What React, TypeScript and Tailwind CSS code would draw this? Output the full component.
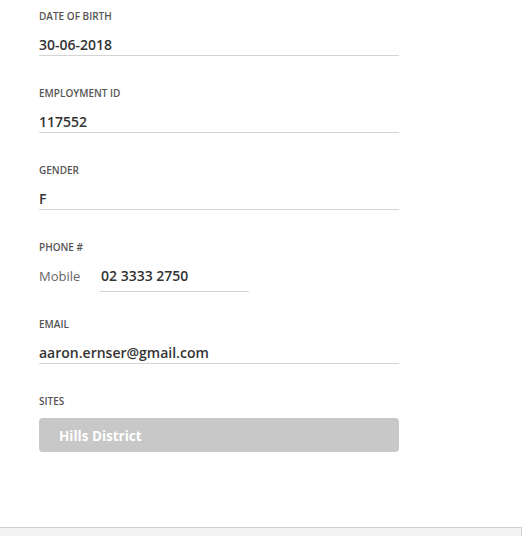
import React from 'react';

interface FieldProps {
  label: string;
  value: string;
}

const Label: React.FC<{ children: React.ReactNode }> = ({ children }) => (
  <div className="h-[12px] text-[10px] leading-[12px] font-semibold uppercase text-[#555555]">{children}</div>
);

// Simple read-only field with underline
const Field: React.FC<FieldProps> = ({ label, value }) => (
  <div className="mb-[31px]">
    <Label>{label}</Label>
    <div className="mt-[13px] border-b border-[#d4d4d4] text-[14px] leading-[20px] font-semibold text-[#333333]">
      {value}
    </div>
  </div>
);

const App: React.FC = () => {
  return (
    <div className="flex h-[536px] w-[522px] flex-col bg-white font-['Open_Sans',sans-serif]">
      <div className="flex-1 pl-[39px] pt-[10px]">
        <div className="w-[360px]">
          <Field label="Date of birth" value="30-06-2018" />
          <Field label="Employment ID" value="117552" />
          <Field label="Gender" value="F" />

          <div className="mb-[26px]">
            <Label>Phone #</Label>
            <div className="mt-[13px] flex items-start">
              <span className="w-[61px] text-[13px] leading-[20px] text-[#666666]">Mobile</span>
              <div className="w-[149px] border-b border-[#d4d4d4] pb-[5px] pl-[1px] text-[14px] leading-[20px] font-semibold text-[#333333]">
                02 3333 2750
              </div>
            </div>
          </div>

          <Field label="Email" value="aaron.ernser@gmail.com" />

          <div>
            <Label>Sites</Label>
            <div className="mt-[11px] flex h-[34px] items-center rounded-[4px] bg-[#c8c8c8] pl-[20px] pt-[2px] text-[13.5px] font-bold text-white">
              Hills District
            </div>
          </div>
        </div>
      </div>
      <div className="h-[9px] border-t border-r border-[#d0d0d0] bg-[#f4f4f4]" />
    </div>
  );
};

export default App;
